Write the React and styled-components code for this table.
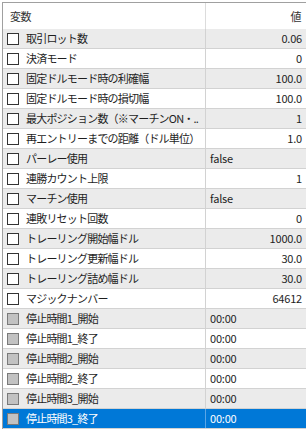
import React from "react";
import styled, { createGlobalStyle } from "styled-components";

const Global = createGlobalStyle`
  html, body { margin: 0; padding: 0; background: #ffffff; }
  body { font-family: "Noto Sans CJK JP", "Noto Sans", sans-serif; }
`;

const Frame = styled.div`
  width: 306px;
  height: 429px;
  overflow: hidden;
  padding: 2px 0 0 2px;
  box-sizing: border-box;
  background: #ffffff;
`;

const Grid = styled.div`
  border-top: 1px solid #a0a0a0;
  border-left: 1px solid #a0a0a0;
  display: flex;
  flex-direction: column;
`;

const HeaderRow = styled.div`
  display: grid;
  grid-template-columns: 202px 1fr;
  height: 26px;
  background: #ffffff;
  color: #333;
  font-size: 11px;
  letter-spacing: -0.5px;
`;

const HeaderCell = styled.div`
  display: flex;
  align-items: center;
  justify-content: ${(p) => (p.$right ? "flex-end" : "flex-start")};
  padding: ${(p) => (p.$right ? "0 5px 0 0" : "0 0 0 7px")};
  border-left: ${(p) => (p.$right ? "1px solid #dcdcdc" : "none")};
`;

const Row = styled.div`
  display: grid;
  grid-template-columns: 202px 1fr;
  height: 19px;
  border-bottom: 1px solid #d2d2d2;
  background: ${(p) => (p.$selected ? "#0078d7" : p.$alt ? "#ebebeb" : "#ffffff")};
  color: ${(p) => (p.$selected ? "#ffffff" : "#1e1e1e")};
  font-size: 11px;
  line-height: 19px;
`;

const NameCell = styled.div`
  display: flex;
  align-items: center;
  gap: 7px;
  padding-left: 4px;
  white-space: nowrap;
  overflow: hidden;
  letter-spacing: -0.8px;
`;

const Check = styled.span`
  flex: none;
  width: 10px;
  height: 10px;
  border: 1px solid ${(p) => (p.$disabled ? "#7a7a7a" : "#333333")};
  background: ${(p) => (p.$disabled ? "#c2c2c2" : "#ffffff")};
`;

const ValueCell = styled.div`
  display: flex;
  align-items: center;
  justify-content: ${(p) => (p.$left ? "flex-start" : "flex-end")};
  padding: ${(p) => (p.$left ? "0 0 0 4px" : "0 4px 0 0")};
  border-left: 1px solid ${(p) => (p.$selected ? "#5aa5e6" : "#d2d2d2")};
  white-space: nowrap;
  letter-spacing: -0.2px;
`;

const rows = [
  ["取引ロット数", "0.06"],
  ["決済モード", "0"],
  ["固定ドルモード時の利確幅", "100.0"],
  ["固定ドルモード時の損切幅", "100.0"],
  ["最大ポジション数（※マーチンON・..", "1"],
  ["再エントリーまでの距離（ドル単位）", "1.0"],
  ["パーレー使用", "false", true],
  ["連勝カウント上限", "1"],
  ["マーチン使用", "false", true],
  ["連敗リセット回数", "0"],
  ["トレーリング開始幅ドル", "1000.0"],
  ["トレーリング更新幅ドル", "30.0"],
  ["トレーリング詰め幅ドル", "30.0"],
  ["マジックナンバー", "64612"],
  ["停止時間1_開始", "00:00", true, true],
  ["停止時間1_終了", "00:00", true, true],
  ["停止時間2_開始", "00:00", true, true],
  ["停止時間2_終了", "00:00", true, true],
  ["停止時間3_開始", "00:00", true, true],
  ["停止時間3_終了", "00:00", true, true],
];

export default function App() {
  return (
    <>
      <Global />
      <Frame>
        <Grid>
          <HeaderRow>
            <HeaderCell>変数</HeaderCell>
            <HeaderCell $right>値</HeaderCell>
          </HeaderRow>
          {rows.map(([name, value, left, disabled], i) => {
            const selected = i === rows.length - 1;
            return (
              <Row key={name} $alt={i % 2 === 0} $selected={selected}>
                <NameCell>
                  <Check $disabled={disabled} />
                  {name}
                </NameCell>
                <ValueCell $left={left} $selected={selected}>
                  {value}
                </ValueCell>
              </Row>
            );
          })}
        </Grid>
      </Frame>
    </>
  );
}
